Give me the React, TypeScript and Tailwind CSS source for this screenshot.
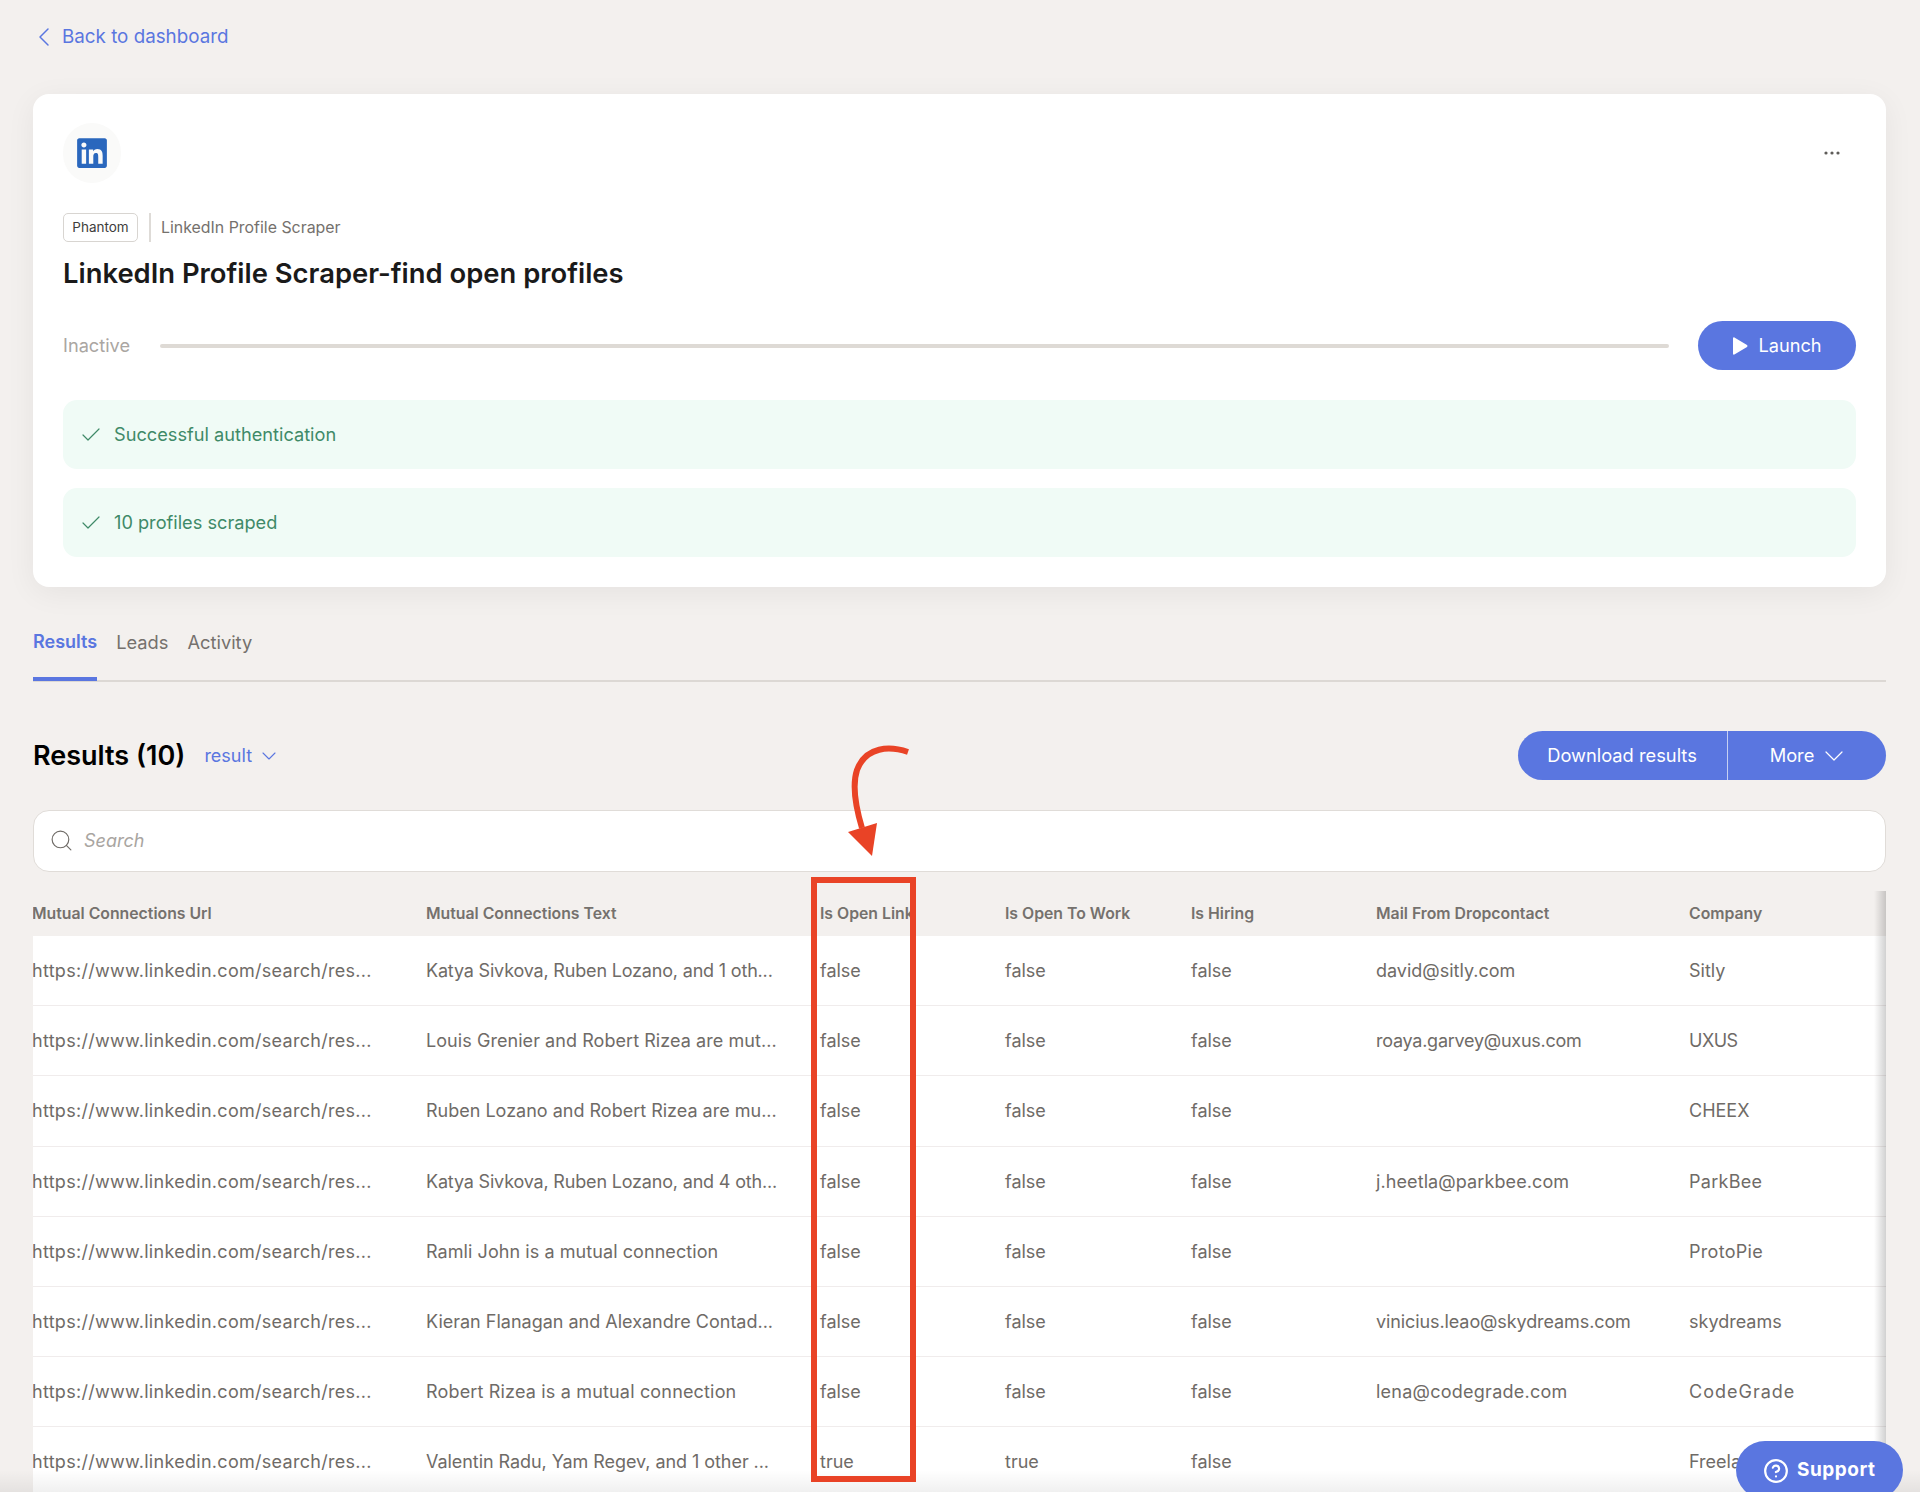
import React from "react";
import { Check, ChevronDown, ChevronLeft, CircleHelp, Search } from "lucide-react";
import { FaLinkedin } from "react-icons/fa";

const cols = "grid grid-cols-[394px_394px_185px_186px_185px_313px_1fr] items-center ml-[-1px]";
const headers = ["Mutual Connections Url", "Mutual Connections Text", "Is Open Link", "Is Open To Work", "Is Hiring", "Mail From Dropcontact", "Company"];
const url = "https://www.linkedin.com/search/res...";
const rows = [
  { text: "Katya Sivkova, Ruben Lozano, and 1 oth...", tt: "tracking-[-0.18px]", open: "false", work: "false", mail: "david@sitly.com", mt: "", company: "Sitly", ct: "" },
  { text: "Louis Grenier and Robert Rizea are mut...", tt: "tracking-[0.06px]", open: "false", work: "false", mail: "roaya.garvey@uxus.com", mt: "tracking-[-0.25px]", company: "UXUS", ct: "tracking-[-0.5px]" },
  { text: "Ruben Lozano and Robert Rizea are mu...", tt: "", open: "false", work: "false", mail: "", mt: "", company: "CHEEX", ct: "" },
  { text: "Katya Sivkova, Ruben Lozano, and 4 oth...", tt: "tracking-[-0.18px]", open: "false", work: "false", mail: "j.heetla@parkbee.com", mt: "tracking-[0.1px]", company: "ParkBee", ct: "tracking-[0.3px]" },
  { text: "Ramli John is a mutual connection", tt: "tracking-[0.07px]", open: "false", work: "false", mail: "", mt: "", company: "ProtoPie", ct: "tracking-[0.3px]" },
  { text: "Kieran Flanagan and Alexandre Contad...", tt: "", open: "false", work: "false", mail: "vinicius.leao@skydreams.com", mt: "tracking-[-0.1px]", company: "skydreams", ct: "" },
  { text: "Robert Rizea is a mutual connection", tt: "tracking-[0.17px]", open: "false", work: "false", mail: "lena@codegrade.com", mt: "tracking-[0.25px]", company: "CodeGrade", ct: "tracking-[1px]" },
  { text: "Valentin Radu, Yam Regev, and 1 other ...", tt: "tracking-[-0.06px]", open: "true", work: "true", mail: "", mt: "", company: "Freelance", ct: "" },
];

function Alert({ text }: { text: string }) {
  return (
    <div className="flex h-[69px] items-center gap-[11px] rounded-[14px] bg-[#f0fbf6] pl-[16px] text-[18.2px] text-[#3f8a68]">
      <Check size={24} strokeWidth={1.2} />
      <span>{text}</span>
    </div>
  );
}

export default function App() {
  return (
    <div className="relative h-[1492px] w-full overflow-hidden bg-[#f3f0ee] font-['Inter',sans-serif]">
      <div className="flex h-[94px] items-start pl-[28px] pt-[25px]">
        <a className="flex items-center gap-[2px] text-[18.8px] leading-6 text-[#5a76e0]">
          <ChevronLeft size={32} strokeWidth={1.1} className="my-[-4px]" />
          <span>Back to dashboard</span>
        </a>
      </div>

      <div className="ml-[33px] mr-[34px] rounded-2xl bg-white px-[30px] pb-[30px] pt-[29px] shadow-[0_6px_30px_rgba(0,0,0,0.06)]">
        <div className="flex items-center justify-between">
          <div className="flex h-[60px] w-[58px] items-center justify-center rounded-full bg-[#fafaf9]">
            <FaLinkedin size={34} className="text-[#2a67bd]" />
          </div>
          <svg width="16" height="4" viewBox="0 0 16 4" className="mr-[16px] fill-[#5f5c59]">
            <circle cx="2" cy="2" r="1.6" />
            <circle cx="8" cy="2" r="1.6" />
            <circle cx="14" cy="2" r="1.6" />
          </svg>
        </div>
        <div className="mt-[30px] flex h-[29px] items-center">
          <span className="flex h-[29px] w-[75px] items-center justify-center rounded-[5px] border border-[#d8d5d1] text-[13.5px] text-[#403e3c]">Phantom</span>
          <span className="ml-[11px] h-[29px] w-[2px] bg-[#dedbd7]" />
          <span className="ml-[10px] text-[15.9px] text-[#75716d]">LinkedIn Profile Scraper</span>
        </div>
        <h1 className="mt-[13px] text-[27.4px] font-semibold leading-9 text-[#1a1a1a]">LinkedIn Profile Scraper-find open profiles</h1>
        <div className="mt-[30px] flex items-center">
          <span className="w-[97px] text-[18.2px] text-[#aaa6a2]">Inactive</span>
          <div className="h-1 flex-1 rounded-full bg-[#dedad5]" />
          <button className="ml-[29px] flex h-[49px] w-[158px] items-center justify-center gap-[10px] rounded-full bg-[#5a76e0] text-[18.2px] text-white">
            <svg width="16" height="18" viewBox="0 0 16 18" className="fill-white"><path d="M1 1.2 C1 .4 1.8 0 2.4 .4 L15 8 C15.6 8.4 15.6 9.6 15 10 L2.4 17.6 C1.8 18 1 17.6 1 16.8 Z" /></svg>
            <span>Launch</span>
          </button>
        </div>
        <div className="mt-[30px] flex flex-col gap-[19px]">
          <Alert text="Successful authentication" />
          <Alert text="10 profiles scraped" />
        </div>
      </div>

      <div className="ml-[33px] mr-[34px] flex h-[95px] items-end gap-[19px] border-b-2 border-[#dcd8d4] text-[18.3px]">
        <span className="mb-[-1px] border-b-4 border-[#5a76e0] pb-[23px] text-[18px] font-semibold leading-6 text-[#5a76e0]">Results</span>
        <span className="pb-[26px] leading-6 text-[#75716d]">Leads</span>
        <span className="pb-[26px] leading-6 text-[#75716d]">Activity</span>
      </div>

      <div className="ml-[33px] mr-[34px] mt-[49px] flex h-[49px] items-center">
        <h2 className="pt-[2px] text-[27px] font-semibold text-black">Results (10)</h2>
        <span className="ml-[19px] text-[18px] text-[#5a76e0]">result</span>
        <ChevronDown size={24} strokeWidth={1.1} className="ml-[5px] text-[#5a76e0]" />
        <div className="ml-auto flex h-[49px] items-stretch overflow-hidden rounded-full bg-[#5a76e0] text-[18.3px] text-white">
          <span className="flex w-[209px] items-center justify-center">Download results</span>
          <span className="w-[1.5px] bg-[#c6d0f3]" />
          <span className="flex w-[158px] items-center justify-center gap-[4px] pr-[2px]">
            More
            <ChevronDown size={32} strokeWidth={0.9} className="mr-[-8px]" />
          </span>
        </div>
      </div>

      <div className="ml-[33px] mr-[34px] mt-[30px] flex h-[62px] items-center gap-[10px] rounded-2xl border-[1.5px] border-[#e0dcd8] bg-white pb-[2px] pl-[15px]">
        <Search size={25} strokeWidth={1.1} className="text-[#6f6b67]" />
        <span className="text-[18px] italic text-[#a9a5a1]">Search</span>
      </div>

      <div className="relative ml-[33px] mr-[34px] mt-[19px] overflow-hidden">
        <div className={`${cols} h-[45px] text-[15.8px] font-semibold text-[#75716d]`}>
          {headers.map((h) => (
            <span key={h} className="whitespace-nowrap">{h}</span>
          ))}
        </div>
        <div className="bg-white">
          {rows.map((r) => (
            <div key={r.text} className={`${cols} h-[70.2px] border-b border-[#f0ecec] text-[18px] text-[#6f6b67]`}>
              <span className="whitespace-nowrap tracking-[0.29px]">{url}</span>
              <span className={`whitespace-nowrap ${r.tt}`}>{r.text}</span>
              <span>{r.open}</span>
              <span>{r.work}</span>
              <span>false</span>
              <span className={`whitespace-nowrap ${r.mt}`}>{r.mail}</span>
              <span className={`whitespace-nowrap ${r.ct}`}>{r.company}</span>
            </div>
          ))}
        </div>
        <div className="absolute bottom-0 right-0 top-0 w-[12px] bg-gradient-to-r from-transparent to-[rgba(0,0,0,0.18)]" />
      </div>

      <div className="absolute bottom-0 left-0 right-0 h-[22px] bg-gradient-to-b from-transparent to-[rgba(0,0,0,0.06)]" />

      <div className="absolute left-[811px] top-[877px] h-[605px] w-[105px] border-[6px] border-[#e94326]" />
      <svg className="absolute left-[840px] top-[740px]" width="80" height="120" viewBox="840 740 80 120" fill="none">
        <path d="M908 752 C890 746 866 746 857 770 C852 785 856 808 862 828" stroke="#e94326" strokeWidth="6" />
        <path d="M848 832 L877 823 L872 856 Z" fill="#e94326" />
      </svg>

      <button className="absolute left-[1736px] top-[1441px] flex h-[58px] w-[167px] items-center gap-[8px] rounded-full bg-[#5a76e0] pl-[27px] pt-[1px] text-[19px] font-bold tracking-[0.5px] text-white">
        <CircleHelp size={26} strokeWidth={2} />
        <span>Support</span>
      </button>
    </div>
  );
}
